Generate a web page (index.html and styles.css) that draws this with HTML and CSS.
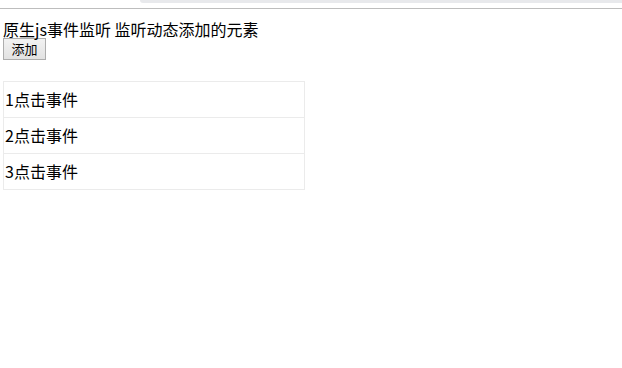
FILE: index.html
```html
<!DOCTYPE html>
<html>
<head>
<meta charset="utf-8">
<link rel="stylesheet" href="styles.css">
</head>
<body>
<div class="topbar"><div class="tab"></div></div>
<div class="page">
  <div class="title">原生js事件监听 监听动态添加的元素</div>
  <button class="add">添加</button>
  <table class="list">
    <tr><td>1点击事件</td></tr>
    <tr><td>2点击事件</td></tr>
    <tr><td>3点击事件</td></tr>
  </table>
</div>
</body>
</html>
```
FILE: styles.css
```css
html, body {
  margin: 0;
  padding: 0;
  background: #fff;
}
body {
  font-family: "Noto Sans CJK SC", "Noto Sans", sans-serif;
  color: #000;
}
.topbar {
  height: 8px;
  border-bottom: 1px solid #bdbdbd;
  display: flex;
}
.tab {
  margin-left: 140px;
  flex: 1;
  height: 3px;
  background: #e8e9ec;
  border-bottom-left-radius: 10px;
}
.page {
  padding: 0 3px;
}
.title {
  margin-top: 12px;
  font-size: 16px;
  line-height: 17px;
  height: 17px;
  letter-spacing: 0;
}
.add {
  display: block;
  margin: 0;
  height: 22px;
  width: 43px;
  padding: 0;
  font-family: "Noto Sans CJK SC", sans-serif;
  font-size: 13px;
  line-height: 18px;
  border: 1px solid #adadad;
  border-radius: 0;
  background: linear-gradient(#f2f2f2, #e2e2e2);
  color: #000;
}
.list {
  margin-top: 21px;
  width: 302px;
  border-collapse: collapse;
  border: 1px solid #ebebeb;
}
.list td {
  height: 33px;
  padding: 0 0 2px 1px;
  border-top: 1px solid #ebebeb;
  font-size: 16px;
  line-height: 20px;
  vertical-align: middle;
}
```
